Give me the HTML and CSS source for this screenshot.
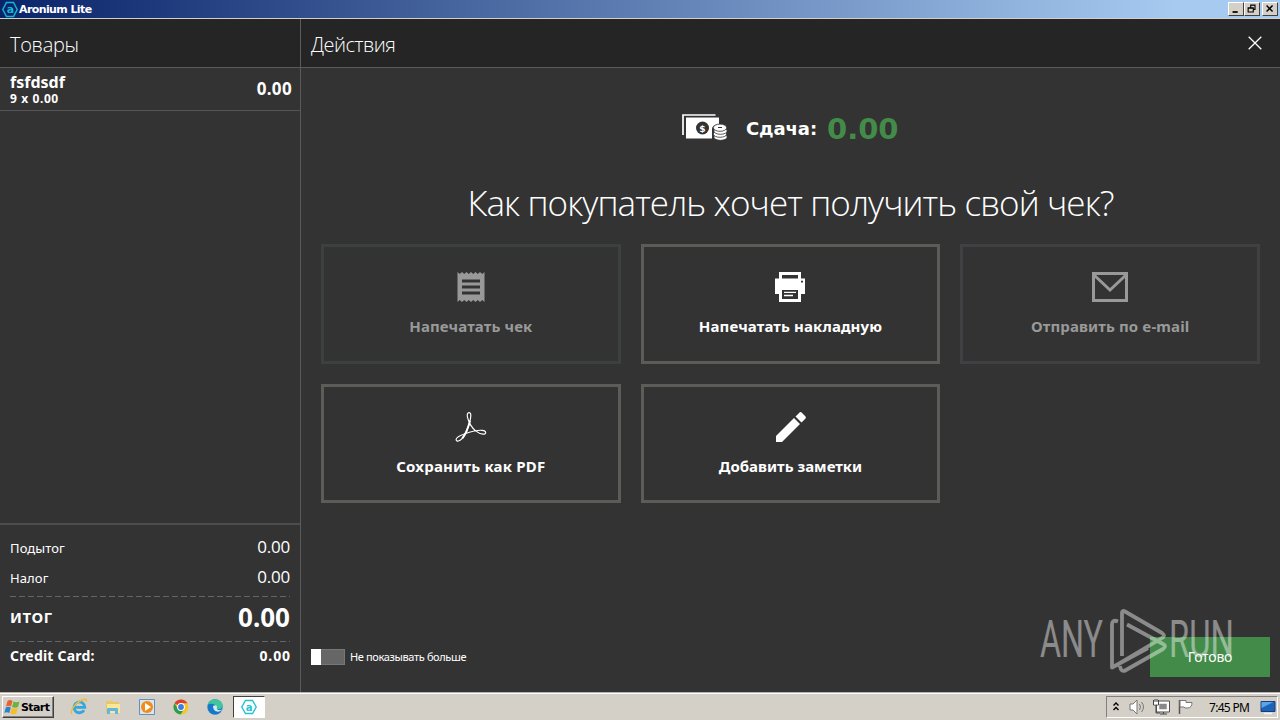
FILE: index.html
```html
<!DOCTYPE html>
<html lang="ru">
<head>
<meta charset="utf-8">
<title>Aronium Lite</title>
<link rel="stylesheet" href="styles.css">
</head>
<body>
<div class="screen">
  <div class="titlebar">
    <svg class="app-icon" width="16" height="17" viewBox="0 0 16 17"><path d="M4.5 1.5h7l3.700 7-3.700 7h-7l-3.700-7z" fill="none" stroke="#15b5d5" stroke-width="1.5"/><text x="4.700" y="12" class="app-letter">a</text></svg>
    <span class="window-title">Aronium Lite</span>
    <div class="window-buttons">
      <svg width="16" height="14" viewBox="0 0 16 14" class="win-btn"><path d="M4 10.5h6" stroke="#000" stroke-width="2"/></svg>
      <svg width="16" height="14" viewBox="0 0 16 14" class="win-btn"><path d="M6.500 5V2.500h5v5H10M6 2.500h6M3.500 5.500h6v5h-6zM3 6h7" fill="none" stroke="#000" stroke-width="1.300"/></svg>
      <svg width="16" height="14" viewBox="0 0 16 14" class="win-btn gap"><path d="M4 3l7 7M11 3l-7 7" stroke="#000" stroke-width="1.700"/></svg>
    </div>
  </div>
  <div class="app">
    <aside class="sidebar">
      <div class="head"><span class="head-text">Товары</span></div>
      <div class="item">
        <div class="item-info"><span class="item-name">fsfdsdf</span><span class="item-qty">9 x 0.00</span></div>
        <span class="item-price">0.00</span>
      </div>
      <div class="totals">
        <div class="row"><span class="label">Подытог</span><span class="amount">0.00</span></div>
        <div class="row"><span class="label">Налог</span><span class="amount">0.00</span></div>
        <div class="dash"></div>
        <div class="row total"><span class="total-label">ИТОГ</span><span class="total-amount">0.00</span></div>
        <div class="dash"></div>
        <div class="row card-row"><span class="pay">Credit Card:</span><span class="pay-amount">0.00</span></div>
      </div>
    </aside>
    <main class="main">
      <div class="head main-head"><span class="head-text actions-title">Действия</span>
        <svg class="close" width="14" height="14" viewBox="0 0 14 14"><path d="M.7.7l12.600 12.600M13.300.7L.7 13.300" stroke="#fff" stroke-width="1.300"/></svg>
      </div>
      <div class="change">
        <svg class="money" width="46" height="27" viewBox="0 0 46 27">
          <path d="M1 21V1h32.500" fill="none" stroke="#fff" stroke-width="1.700"/>
          <path d="M4 3.500h33v6.500q-7 1-7 5v9.500H4z" fill="#fff"/>
          <circle cx="20.500" cy="14" r="6.500" fill="#333"/>
          <text x="17.200" y="17.500" class="dollar">$</text>
          <g fill="#fff" stroke="#333" stroke-width=".8"><ellipse cx="38.500" cy="23" rx="6.700" ry="3.300"/><ellipse cx="38" cy="20" rx="6.700" ry="3.300"/><ellipse cx="38.500" cy="17" rx="6.700" ry="3.300"/><ellipse cx="38" cy="13.700" rx="6.700" ry="3.600"/></g>
          <path d="M36 13.500h4" stroke="#333"/>
        </svg>
        <span class="change-label">Сдача:</span><span class="change-amount">0.00</span>
      </div>
      <h1 class="question">Как покупатель хочет получить свой чек?</h1>
      <div class="grid">
        <div class="tile off">
          <svg class="ico" width="28" height="30" viewBox="0 0 28 30"><path fill="#999" fill-rule="evenodd" d="M.5 0l2.250 2L5 0l2.250 2L9.500 0l2.250 2L14 0l2.250 2L18.500 0l2.250 2L23 0l2.250 2L27.500 0v30l-2.250-2L23 30l-2.250-2-2.250 2-2.250-2L14 30l-2.250-2-2.250 2-2.250-2L5 30l-2.250-2L.5 30zM5 7.500v3h18v-3zM5 13.500v3h18v-3zM5 19.500v3h18v-3z"/></svg>
          <span class="cap">Напечатать чек</span></div>
        <div class="tile">
          <svg class="ico" width="30" height="30" viewBox="0 0 30 30"><path fill="#fff" fill-rule="evenodd" d="M4 0h22v6.500h4V22h-4v8H4v-8H0V6.500h4zM7 3v3.500h16V3zM7 18v9h16v-9zM26 8.800v1.700h2V8.800z"/><path d="M9 20.300h12M9 23.500h9" stroke="#fff" stroke-width="1.300"/></svg>
          <span class="cap">Напечатать накладную</span></div>
        <div class="tile off mail">
          <svg class="ico" width="36" height="30" viewBox="0 0 36 30"><path d="M1.500 1.500h33v27h-33zM2 3l16 15L34 3" fill="none" stroke="#999" stroke-width="3"/></svg>
          <span class="cap">Отправить по e-mail</span></div>
        <div class="tile">
          <svg class="ico" width="32" height="31" viewBox="0 0 32 31"><path d="M13.300.8c3-.8 3 3 1.600 8.500C13.400 15.500 10 23.500 7 27.300 4.700 30.200.9 31 .6 28.700.3 26.300 5 24 10.500 22.200c7-2.300 13-3.700 17-3.200 4.600.5 4.900 4 .9 3.900-4.900-.2-10.200-5-12.700-9.300C12.600 8.300 10.800 2 13.300.8z" fill="none" stroke="#fff" stroke-width="1.200"/><path d="M15 9C13.400 15 10 23.500 7 27.300" fill="none" stroke="#fff" stroke-width="2"/></svg>
          <span class="cap tight">Сохранить как PDF</span></div>
        <div class="tile">
          <svg class="ico pencil" width="30" height="30" viewBox="0 0 30 30"><path d="M0 24L18 6l6 6L6 30H0zM19.500 4.500L23.300.7q1.200-1.200 2.500 0L29.300 4.200q1.200 1.300 0 2.500L25.500 10.500z" fill="#fff"/></svg>
          <span class="cap note">Добавить заметки</span></div>
      </div>
      <div class="footer">
        <div class="switch"><i></i></div>
        <span class="hide-label">Не показывать больше</span>
        <button class="done">Готово</button>
      </div>
      <svg class="watermark" width="200" height="66" viewBox="0 0 200 66">
        <g class="wm-text"><text x="3" y="49.500" textLength="63" lengthAdjust="spacingAndGlyphs">ANY</text><text x="132" y="49.500" textLength="65" lengthAdjust="spacingAndGlyphs">RUN</text></g>
        <path d="M81 14.500Q75 12 75 18V60.500L111 41M85 49V6q0-3 3-1.500L125 26q4 2.500 0 5L79 58.500M83 59q1 7 6 4L126 42q4-3 0-5L90 17.500" fill="none" stroke="#fff" stroke-width="3.800" stroke-linejoin="round"/>
      </svg>
    </main>
  </div>
  <div class="taskbar">
    <div class="start">
      <svg width="17" height="16" viewBox="0 0 17 16"><path d="M3.500 2Q6 0 8.500 2L7 7.500Q4.500 6 2 7.500z" fill="#e9622b"/><path d="M9.500 2.500q3 1.500 6 0L14 8q-3 1.500-6 0z" fill="#6db33f"/><path d="M1.800 8.500q2.500-1.500 5 0L5.300 14q-2.500-1.500-5 0z" fill="#2d7fd0"/><path d="M7.800 9q3 1.500 6 0l-1.500 5.500q-3 1.500-6 0z" fill="#f6bd27"/></svg>
      <span>Start</span></div>
    <div class="launch">
      <svg width="18" height="18" viewBox="0 0 18 18"><path d="M14 12.200A5.400 5.400 0 1 1 14.800 9.300H5" fill="none" stroke="#35a7dc" stroke-width="2.800"/><path d="M2 16C-1 14 5 5 12 2c4-1.700 5-.5 4 2" fill="none" stroke="#edbd35" stroke-width="1.400"/></svg>
      <svg width="18" height="18" viewBox="0 0 18 18"><path d="M2 3h5l1 1h7v11H2z" fill="#e9c95f"/><path d="M3 6h13v9H3z" fill="#f8e69a"/><path d="M3 16v-5q0-1 1-1h9q1 0 1 1v5h-3v-3H6v3z" fill="#65b6df"/></svg>
      <svg width="18" height="18" viewBox="0 0 18 18"><path d="M1.500 1.500h15v15h-15z" fill="#d6e6f3" stroke="#6490b9"/><circle cx="9" cy="9" r="6" fill="#f28c17"/><path d="M7 5l6 4-6 4z" fill="#fff"/></svg>
      <svg width="18" height="18" viewBox="0 0 18 18"><circle cx="9" cy="9" r="7.500" fill="#f4c62a"/><path d="M9 9L2.500 5.200A7.500 7.500 0 0 1 15.500 5.300H9z" fill="#dd4032"/><path d="M2.500 5.200A7.500 7.500 0 0 0 8.600 16.500L12 11H6z" fill="#2d9b51"/><circle cx="9" cy="9" r="3.900" fill="#fff"/><circle cx="9" cy="9" r="2.900" fill="#397fe0"/></svg>
      <svg width="18" height="18" viewBox="0 0 18 18"><circle cx="9" cy="9" r="7.700" fill="#1679c7"/><path d="M1.500 7C3-1 17 0 16.700 8c-.2 3-4 4-6 2.500C12 7 5 4 1.500 7z" fill="#3fc69b"/><path d="M7 8q4-2 4 1c-1 3 2 4 5 2.500-2 3.500-9 3-9-3.500z" fill="#d4e9ef"/></svg>
    </div>
    <div class="active-task"><svg width="16" height="16" viewBox="0 0 16 16"><path d="M4.500 1.500h7l3.700 6.500-3.700 6.500h-7L.8 8z" fill="none" stroke="#25c2d2" stroke-width="1.400"/><text x="4.700" y="11.500" class="app-letter task">a</text></svg></div>
    <div class="tray">
      <svg width="8" height="12" viewBox="0 0 8 12"><path d="M1.500 4.500L4 2l2.500 2.500M1.500 9L4 6.500 6.500 9" fill="none" stroke="#000" stroke-width="1.400"/></svg>
      <svg class="speaker" width="17" height="16" viewBox="0 0 17 16"><path d="M1 5h3l4-4v14l-4-4H1z" fill="#fff" stroke="#777"/><path d="M10.500 5q2 3 0 6M12.500 3q4 5 0 10" fill="none" stroke="#777"/></svg>
      <svg class="network" width="17" height="16" viewBox="0 0 17 16"><path d="M5 3.500h10v8H5z" fill="#888" stroke="#fff" stroke-width="2.500"/><path d="M3.500 2h13v11h-13z" fill="none" stroke="#555"/><path d="M.5 1v5h5V1M3 6v8h4M7 15h7M10.500 13v2" fill="none" stroke="#444"/><path d="M1 1.500h4v4H1z" fill="#fff"/><path d="M2 0v3M4 0v3" stroke="#444"/></svg>
      <svg class="flag" width="17" height="16" viewBox="0 0 17 16"><path d="M2.500 15V1" stroke="#555" stroke-width="1.500"/><path d="M3 1.500h6v2h6q0 5-4 5.500H8L7 8H3z" fill="#fff" stroke="#777"/></svg>
      <span class="clock">7:45 PM</span>
      <svg class="desk" width="16" height="15" viewBox="0 0 16 15"><path d="M1 1.500h14v10H1z" fill="#1c64b8" stroke="#1b3c78"/><path d="M1.500 2h12L1.500 8z" fill="#5aa4e8"/><path d="M4 13.500h8" stroke="#eef4fa" stroke-width="1.500"/></svg>
    </div>
  </div>
</div>
</body>
</html>
```
FILE: styles.css
```css
* { box-sizing: border-box; }
body { margin: 0; overflow: hidden; background: #333; color: #fff; font-family: "Noto Sans", "Open Sans", sans-serif; }
svg { display: block; flex: none; }
span { white-space: nowrap; }
.screen { width: 1280px; height: 720px; display: flex; flex-direction: column; }
.titlebar { height: 19px; flex: none; display: flex; align-items: center; padding-left: 2px; background: linear-gradient(90deg, #0a246a, #a6caf0 92%); border-bottom: 1px solid #d4d0c8; }
.app-letter { font: bold 11px "DejaVu Sans", sans-serif; fill: #15b5d5; }
.app-letter.task { font-size: 10px; fill: #25c2d2; }
.window-title { font: bold 11px/17px "DejaVu Sans", sans-serif; margin-left: 1px; letter-spacing: -.6px; }
.window-buttons { display: flex; margin-left: auto; padding-right: 2px; }
.win-btn { background: #d4d0c8; border: 1px solid; border-color: #fff #404040 #404040 #fff; }
.gap { margin-left: 2px; }
.app { flex: 1; display: flex; min-height: 0; }
.sidebar { width: 301px; flex: none; border-right: 1px solid #5b5b5b; display: flex; flex-direction: column; }
.head { height: 49px; flex: none; background: #252525; border-bottom: 1px solid #5b5b5b; display: flex; align-items: center; padding: 3px 18px 0 10px; }
.head-text { font: 300 20px/28px "Open Sans", sans-serif; letter-spacing: -.3px; }
.actions-title { letter-spacing: -.5px; }
.item { height: 43px; flex: none; border-bottom: 1px solid #555; display: flex; justify-content: space-between; padding: 0 8px 0 10px; font-weight: 700; }
.item-info { display: flex; flex-direction: column; }
.item-name { font-size: 16px; line-height: 20px; margin-top: 4px; }
.item-qty { font-size: 12px; line-height: 13px; letter-spacing: .6px; }
.item-price { font-size: 17px; line-height: 42px; letter-spacing: .35px; }
.totals { margin-top: auto; height: 169px; border-top: 2px solid #4d4d4d; padding: 8px 10px 0; }
.row { display: flex; align-items: center; justify-content: space-between; height: 30px; }
.label { font-size: 13px; letter-spacing: .1px; }
.amount { font: 400 17px/28px "Open Sans", sans-serif; letter-spacing: -.2px; padding-bottom: 2px; }
.dash { height: 1px; margin-top: 3px; background: repeating-linear-gradient(90deg, #666 0 6px, transparent 6px 9px); }
.total { height: 41px; font-weight: 700; padding-bottom: 2px; }
.total-label { font-size: 15px; letter-spacing: .6px; }
.total-amount { font-size: 26px; }
.card-row { height: 27px; font-weight: 700; font-size: 14px; letter-spacing: .2px; }
.pay-amount { letter-spacing: .9px; margin-right: -1px; }
.main { flex: 1; display: flex; flex-direction: column; position: relative; min-width: 0; }
.main-head { justify-content: space-between; }
.close { margin-top: -4px; }
.change { display: flex; align-items: center; height: 60px; margin-top: 31px; padding-left: 381px; }
.money { margin-top: -4px; }
.dollar { font: bold 9px "DejaVu Sans", sans-serif; fill: #fff; }
.change-label { margin-left: 18px; font: bold 18px/30px "DejaVu Sans", sans-serif; letter-spacing: -.1px; }
.change-amount { margin-left: 10px; color: #438b49; font: bold 29px/36px "DejaVu Sans", sans-serif; }
.question { margin: 19px 0 0; height: 49px; text-align: center; font: 300 35px/49px "Open Sans", sans-serif; letter-spacing: -.92px; white-space: nowrap; }
.grid { display: grid; grid-template-columns: repeat(3, 1fr); grid-template-rows: 120px 119px; gap: 20px; padding: 0 20px; margin-top: 17px; }
.tile { border: 3px solid #5c5c59; display: flex; flex-direction: column; align-items: center; }
.off { border-color: #3c403f; color: #999; }
.mail { border-color: #404043; }
.ico { margin-top: 25px; height: 30px; }
.pencil { margin-left: 2px; }
.cap { font-size: 15px; font-weight: 700; line-height: 20px; margin-top: 14px; letter-spacing: .12px; }
.tight { letter-spacing: .22px; }
.note { letter-spacing: 0; }
.footer { margin-top: auto; height: 55px; display: flex; align-items: flex-start; padding: 0 10px; }
.switch { width: 34px; height: 16px; background: #666; border: 1px solid #777; margin-top: 12px; }
.switch i { display: block; width: 10px; height: 16px; margin: -1px; background: #fff; }
.hide-label { font-size: 11px; line-height: 20px; letter-spacing: -.36px; margin: 10px 0 0 5px; }
.done { margin-left: auto; width: 120px; height: 40px; border: 0; padding: 0 0 2px; background: #438b49; color: #fff; font: 14px "Noto Sans", sans-serif; letter-spacing: -.2px; }
.watermark { position: absolute; left: 736px; top: 588px; opacity: .43; pointer-events: none; }
.wm-text { font: 400 52px Roboto, sans-serif; fill: #fff; }
.taskbar { height: 28px; flex: none; background: #d4d0c8; box-shadow: inset 0 1px #b5b2ad, inset 0 2px #fff; display: flex; align-items: center; color: #000; padding: 2px 2px 0; }
.start { width: 52px; height: 22px; display: flex; align-items: center; border: 1px solid; border-color: #fff #404040 #404040 #fff; font: bold 11px "DejaVu Sans", sans-serif; padding-left: 1px; box-shadow: inset -1px -1px #808080; letter-spacing: -.6px; }
.launch { display: flex; gap: 16px; margin-left: 16px; }
.active-task { width: 32px; height: 22px; margin-left: 9px; background: #fff; border: 1px solid; border-color: #404040 #fff #fff #404040; display: flex; justify-content: center; align-items: center; }
.tray { width: 172px; height: 22px; margin-left: auto; border: 1px solid; border-color: #808080 #fff #fff #808080; display: flex; align-items: center; padding-left: 5px; }
.speaker { margin-left: 9px; }
.network, .flag { margin-left: 7px; }
.clock { margin-left: 15px; font: 12px "Noto Sans", sans-serif; letter-spacing: -.7px; width: 40px; }
.desk { margin-left: 11px; }
```
